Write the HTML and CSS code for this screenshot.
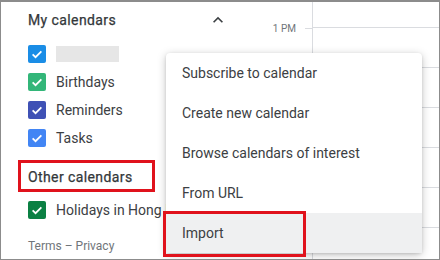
FILE: index.html
```html
<!DOCTYPE html>
<html lang="en">
<head>
  <meta charset="UTF-8">
  <title>Calendar - Add calendar menu</title>
  <link rel="stylesheet" href="styles.css">
</head>
<body>
  <div class="frame">
    <aside class="sidebar">
      <div class="section-head">
        <span>My calendars</span>
        <svg class="chevron" viewBox="0 0 24 24" width="20" height="20"><path d="M12 8l-6 6 1.41 1.41L12 10.83l4.59 4.58L18 14z" fill="#3c4043"/></svg>
      </div>
      <ul class="cal-list">
        <li><span class="check c-blue"></span><span class="redacted"></span></li>
        <li><span class="check c-green"></span>Birthdays</li>
        <li><span class="check c-indigo"></span>Reminders</li>
        <li><span class="check c-sky"></span>Tasks</li>
      </ul>
      <div class="section-head other">Other calendars</div>
      <ul class="cal-list">
        <li><span class="check c-forest"></span>Holidays in Hong Kong</li>
      </ul>
      <div class="terms">Terms – Privacy</div>
    </aside>

    <div class="gutter">
      <div class="hour"><span>1 PM</span><i class="tick"></i></div>
    </div>

    <div class="grid"></div>

    <ul class="menu">
      <li>Subscribe to calendar</li>
      <li>Create new calendar</li>
      <li>Browse calendars of interest</li>
      <li>From URL</li>
      <li class="active">Import<span class="mark"></span></li>
    </ul>
  </div>
</body>
</html>
```

FILE: styles.css
```css
* {
  margin: 0;
  padding: 0;
  box-sizing: border-box;
}

body {
  font-family: Roboto, "Liberation Sans", Arial, sans-serif;
  color: #3c4043;
  background: #fff;
}

.frame {
  position: relative;
  width: 440px;
  height: 260px;
  border: 1px solid #8c8c8c;
  border-top-width: 2px;
  display: grid;
  grid-template-columns: 239px 72px 1fr;
  overflow: hidden;
}

/* sidebar */
.sidebar {
  padding: 0 12px 0 27px;
  font-size: 14px;
  white-space: nowrap;
  overflow: hidden;
}

.section-head {
  display: flex;
  align-items: center;
  justify-content: space-between;
  height: 36px;
  margin-bottom: 2px;
  font-size: 14px;
  letter-spacing: 0.4px;
  color: #33373a;
  -webkit-text-stroke: 0.25px #33373a;
}

.chevron {
  display: block;
}

.cal-list {
  list-style: none;
}

.cal-list li {
  display: flex;
  align-items: center;
  gap: 10px;
  height: 28px;
}

.check {
  flex: none;
  width: 18px;
  height: 18px;
  border-radius: 2px;
  background-repeat: no-repeat;
  background-position: center;
  background-size: 14px 14px;
  background-image: url("data:image/svg+xml,%3Csvg xmlns='http://www.w3.org/2000/svg' viewBox='0 0 24 24'%3E%3Cpath d='M4.5 12.5l5 5 10-10' fill='none' stroke='%23fff' stroke-width='3'/%3E%3C/svg%3E");
}

.c-blue { background-color: #1a8de6; }
.c-green { background-color: #33b679; }
.c-indigo { background-color: #3f51b5; }
.c-sky { background-color: #4285f4; }
.c-forest { background-color: #0b8043; }

.redacted {
  width: 63px;
  height: 16px;
  background: #e6e6e6;
}

.section-head.other {
  display: block;
  width: 137px;
  height: 32px;
  margin: 8px 0 4px -10px;
  padding: 4px 0 0 7px;
  border: 3px solid #e0121c;
  line-height: 20px;
}

.terms {
  margin-top: 15px;
  font-size: 12px;
  color: #70757a;
}

/* time gutter and day grid */
.gutter {
  padding-top: 18px;
}

.hour {
  display: flex;
  align-items: center;
  justify-content: flex-end;
  gap: 9px;
  height: 16px;
  font-size: 10px;
  color: #70757a;
}

.tick {
  width: 7px;
  height: 1px;
  background: #dadce0;
}

.grid {
  border-left: 1px solid #dadce0;
  background: repeating-linear-gradient(to bottom, transparent 0 25px, #dadce0 25px 26px, transparent 26px 40px);
}

/* add-calendar menu */
.menu {
  position: absolute;
  left: 165px;
  top: 51px;
  width: 256px;
  list-style: none;
  background: #fff;
  border-radius: 4px;
  box-shadow: 0 2px 10px rgba(0, 0, 0, 0.22), 0 1px 3px rgba(0, 0, 0, 0.12);
  font-size: 14px;
}

.menu li {
  position: relative;
  display: flex;
  align-items: center;
  height: 40px;
  padding-left: 16px;
}

.menu li.active {
  background: #eff0f1;
}

.mark {
  position: absolute;
  left: -3px;
  top: -2px;
  width: 143px;
  height: 46px;
  border: 3px solid #e0121c;
}
```
